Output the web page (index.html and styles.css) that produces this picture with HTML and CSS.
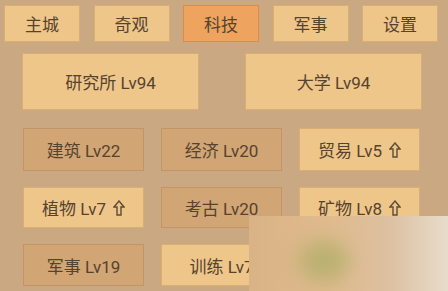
FILE: index.html
```html
<!DOCTYPE html>
<html lang="zh">
<head>
  <meta charset="UTF-8">
  <meta name="viewport" content="width=device-width, initial-scale=1.0">
  <title>科技</title>
  <link rel="stylesheet" href="styles.css">
</head>
<body>
  <div class="screen">
    <div class="tabs">
      <div class="tab">主城</div>
      <div class="tab">奇观</div>
      <div class="tab active">科技</div>
      <div class="tab">军事</div>
      <div class="tab">设置</div>
    </div>
    <div class="main-row">
      <div class="big">研究所 Lv94</div>
      <div class="big">大学 Lv94</div>
    </div>
    <div class="grid">
      <div class="cell dark">建筑 Lv22</div>
      <div class="cell dark">经济 Lv20</div>
      <div class="cell">贸易 Lv5 <svg class="up" viewBox="0 0 12 16"><path d="M6 1 L11 7 L8 7 L8 15 L4 15 L4 7 L1 7 Z"/></svg></div>
      <div class="cell">植物 Lv7 <svg class="up" viewBox="0 0 12 16"><path d="M6 1 L11 7 L8 7 L8 15 L4 15 L4 7 L1 7 Z"/></svg></div>
      <div class="cell dark">考古 Lv20</div>
      <div class="cell">矿物 Lv8 <svg class="up" viewBox="0 0 12 16"><path d="M6 1 L11 7 L8 7 L8 15 L4 15 L4 7 L1 7 Z"/></svg></div>
      <div class="cell dark">军事 Lv19</div>
      <div class="cell">训练 Lv7</div>
      <div class="cell">武器 Lv6</div>
    </div>
    <div class="watermark"><div class="spot"></div></div>
  </div>
</body>
</html>
```

FILE: styles.css
```css
body {
  margin: 0;
  background: #caa982;
  font-family: Roboto, "Noto Sans CJK SC", sans-serif;
  color: #55432f;
}
.screen {
  position: relative;
  width: 448px;
  height: 291px;
  overflow: hidden;
}
.tabs {
  display: flex;
  justify-content: space-between;
  width: 434px;
  padding: 5px 0 0 4px;
}
.tab, .big, .cell {
  display: flex; align-items: center; justify-content: center;
  background: #efc68a;
  border: 1px solid #d9ad74;
  box-sizing: border-box;
  font-size: 17px;
}
.tab { width: 76px; height: 37px; }
.tab.active { background: #eea35f; border-color: #d98c4c; }
.main-row {
  display: flex;
  gap: 46px;
  padding: 11px 0 0 22px;
}
.big { width: 177px; height: 57px; }
.grid {
  display: grid;
  grid-template-columns: 121px 121px 121px;
  grid-template-rows: 43px 41px 42px;
  column-gap: 17px;
  row-gap: 16px;
  padding: 18px 0 0 23px;
}
.cell.dark { background: #d2a575; border-color: #c29468; }
.up {
  width: 12px; height: 16px;
  margin-left: 7px;
  fill: none;
  stroke: #5e4c38;
  stroke-width: 1.4;
}
.watermark {
  position: absolute;
  left: 249px; top: 216px;
  width: 199px; height: 75px;
  background: linear-gradient(90deg, #d9b386 0%, #e0bb8d 40%, #dcc0a0 70%, #e9dccb 100%);
}
.spot {
  position: absolute;
  left: 50px; top: 25px;
  width: 50px; height: 40px;
  border-radius: 50%;
  background: #b9b070;
  filter: blur(10px);
}
```
